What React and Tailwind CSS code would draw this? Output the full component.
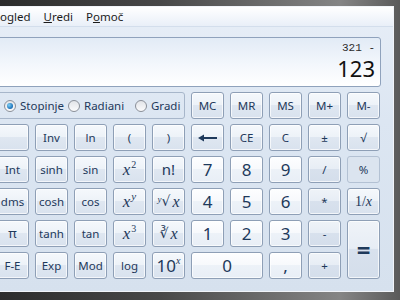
const ui = "font-['Noto_Sans','Open_Sans',sans-serif]"
const serif = "font-['Liberation_Serif','DejaVu_Serif',serif]"

const base =
  'flex items-center justify-center rounded-[3px] border text-[#1e395b] shadow-[inset_0_0_0_1px_rgba(255,255,255,0.7)]'
const fnStyle =
  'border-[#8e9fb6] bg-[linear-gradient(to_bottom,#f5f8fc_0%,#edf2f8_48%,#dfe7f1_50%,#d9e2ee_100%)]'
const numStyle =
  'border-[#8e9fb6] bg-[linear-gradient(to_bottom,#fdfeff_0%,#f7f9fc_48%,#edf2f8_50%,#e8eef6_100%)]'
const opStyle =
  'border-[#8e9fb6] bg-[linear-gradient(to_bottom,#eff3f8_0%,#e7edf5_48%,#d8e1ed_50%,#d4deeb_100%)]'
const flatStyle = 'border-[#b3c1d3] bg-[#dbe4ef] shadow-none'

function X() {
  return <span className={`${serif} italic`}>x</span>
}

function Btn({ children, kind = 'fn', className = '' }) {
  const style = kind === 'num' ? numStyle : kind === 'op' ? opStyle : kind === 'flat' ? flatStyle : fnStyle
  return <div className={`${base} ${style} ${className}`}>{children}</div>
}

function Radio({ checked, label, className = '' }) {
  return (
    <div className={`flex items-center gap-[4px] ${className}`}>
      <span className="flex h-[12px] w-[12px] shrink-0 items-center justify-center rounded-full border border-[#8a8f98] bg-[linear-gradient(to_bottom,#e2e4e8,#fbfbfc)]">
        {checked && (
          <span className="h-[6px] w-[6px] rounded-full bg-[radial-gradient(circle_at_35%_35%,#7fd0f5,#1a6fb8_70%,#0d4f8f)]" />
        )}
      </span>
      <span className="text-[11.5px] text-[#1e395b]">{label}</span>
    </div>
  )
}

function Arrow() {
  return (
    <svg width="20" height="8" viewBox="0 0 20 8">
      <rect x="5" y="3" width="14" height="2" fill="#1e395b" />
      <path d="M0 4 L6 0.5 L6 7.5 Z" fill="#1e395b" />
    </svg>
  )
}

export default function App() {
  return (
    <div className={`h-[300px] w-[400px] overflow-hidden bg-[linear-gradient(to_right,#2c2c2c,#484848_40%,#858585_85%,#5a5a5a)] pt-[6px] ${ui}`}>
      <div className="ml-[-10px] flex h-[286px] w-[404px] flex-col border border-[#f1f4f9] bg-[linear-gradient(to_bottom,#e7eef7_0%,#dce6f2_40%,#d6e1ee_100%)]">
        <div className="flex h-[20px] items-center gap-[13px] border-b border-[#d3deec] bg-[linear-gradient(to_bottom,#ffffff,#e9eff8)] pl-[2px] pt-[1px] text-[11.5px] text-[#1b1b1b]">
          <span>
            <span className="underline">P</span>ogled
          </span>
          <span>
            <span className="underline">U</span>redi
          </span>
          <span>
            P<span className="underline">o</span>moč
          </span>
        </div>

        <div className="flex flex-col pl-[5px] pr-[12px] pt-[10px]">
          <div className="flex h-[50px] flex-col items-end rounded-[3px] border border-[#8fa2bc] bg-[linear-gradient(to_bottom,#e2ebf6,#f3f7fc_55%,#ffffff)] pr-[5px] pt-[3px]">
            <span className="font-['Liberation_Mono',monospace] text-[11px] leading-[14px] text-[#2a2a2a]">321 -</span>
            <span className="text-[22px] leading-[26px] text-[#111]">123</span>
          </div>

          <div className="mt-[5px] grid grid-cols-[repeat(10,33px)] grid-rows-[repeat(6,27px)] gap-x-[6px] gap-y-[5px] text-[11.5px]">
            <div className="col-span-5 flex items-center rounded-[3px] border border-[#a7b6ca] pl-[7px]">
              <Radio checked label="Stopinje" className="w-[64px]" />
              <Radio label="Radiani" className="w-[67px]" />
              <Radio label="Gradi" />
            </div>
            <Btn>MC</Btn>
            <Btn>MR</Btn>
            <Btn>MS</Btn>
            <Btn>M+</Btn>
            <Btn>M-</Btn>

            <Btn />
            <Btn>Inv</Btn>
            <Btn>ln</Btn>
            <Btn>(</Btn>
            <Btn>)</Btn>
            <Btn>
              <Arrow />
            </Btn>
            <Btn>CE</Btn>
            <Btn>C</Btn>
            <Btn>±</Btn>
            <Btn>√</Btn>

            <Btn>Int</Btn>
            <Btn>sinh</Btn>
            <Btn>sin</Btn>
            <Btn className="text-[17px]">
              <X />
              <sup className={`${serif} ml-[1px] text-[10px]`}>2</sup>
            </Btn>
            <Btn className="text-[15px]">n!</Btn>
            <Btn kind="num" className="text-[17px]">7</Btn>
            <Btn kind="num" className="text-[17px]">8</Btn>
            <Btn kind="num" className="text-[17px]">9</Btn>
            <Btn kind="op">/</Btn>
            <Btn kind="flat">%</Btn>

            <Btn>dms</Btn>
            <Btn>cosh</Btn>
            <Btn>cos</Btn>
            <Btn className="text-[17px]">
              <X />
              <sup className={`${serif} ml-[1px] text-[11px] italic`}>y</sup>
            </Btn>
            <Btn className="text-[16px]">
              <span className="font-['DejaVu_Sans',sans-serif] text-[14px]">
                <sup className={`${serif} text-[9px] italic`}>y</sup>√
              </span>
              <span className="ml-[2px]">
                <X />
              </span>
            </Btn>
            <Btn kind="num" className="text-[17px]">4</Btn>
            <Btn kind="num" className="text-[17px]">5</Btn>
            <Btn kind="num" className="text-[17px]">6</Btn>
            <Btn kind="op">*</Btn>
            <Btn className={`${serif} text-[14px]`}>
              1/<span className="italic">x</span>
            </Btn>

            <Btn className="text-[13px]">π</Btn>
            <Btn>tanh</Btn>
            <Btn>tan</Btn>
            <Btn className="text-[17px]">
              <X />
              <sup className={`${serif} ml-[1px] text-[10px]`}>3</sup>
            </Btn>
            <Btn className="text-[16px]">
              <span className="font-['DejaVu_Sans',sans-serif] text-[14px]">∛</span>
              <span className="ml-[2px]">
                <X />
              </span>
            </Btn>
            <Btn kind="num" className="text-[17px]">1</Btn>
            <Btn kind="num" className="text-[17px]">2</Btn>
            <Btn kind="num" className="text-[17px]">3</Btn>
            <Btn kind="op">-</Btn>
            <Btn kind="op" className="row-span-2 text-[24px] font-bold">=</Btn>

            <Btn>F-E</Btn>
            <Btn>Exp</Btn>
            <Btn>Mod</Btn>
            <Btn>log</Btn>
            <Btn className="text-[17px]">
              10
              <sup className={`${serif} text-[10px] italic`}>x</sup>
            </Btn>
            <Btn kind="num" className="col-span-2 text-[17px]">0</Btn>
            <Btn kind="num" className="text-[17px]">,</Btn>
            <Btn kind="op">+</Btn>
          </div>
        </div>
      </div>
    </div>
  )
}
